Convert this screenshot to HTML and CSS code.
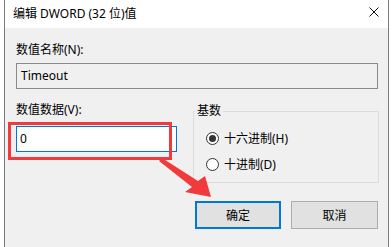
FILE: index.html
```html
<!DOCTYPE html>
<html lang="zh-CN">
<head>
<meta charset="utf-8">
<title>编辑 DWORD (32 位)值</title>
<link rel="stylesheet" href="styles.css">
</head>
<body>
<div class="page">
  <div class="dialog">
    <div class="titlebar">
      <span class="title">编辑 DWORD (32 位)值</span>
      <svg class="close" width="10" height="10" viewBox="0 0 10 10"><path d="M0.5 0.5 L9.5 9.5 M9.5 0.5 L0.5 9.5" stroke="#111" stroke-width="1" fill="none"/></svg>
    </div>
    <div class="content">
      <div class="label">数值名称(N):</div>
      <div class="textbox readonly">Timeout</div>
      <div class="lower">
        <div class="datacol">
          <div class="label">数值数据(V):</div>
          <div class="textbox active">0</div>
        </div>
        <fieldset class="group">
          <legend>基数</legend>
          <div class="radios">
            <div class="radio-row"><span class="radio checked"></span><span>十六进制(H)</span></div>
            <div class="radio-row"><span class="radio"></span><span>十进制(D)</span></div>
          </div>
        </fieldset>
      </div>
      <div class="buttons">
        <button class="btn default">确定</button>
        <button class="btn">取消</button>
      </div>
    </div>
  </div>
  <svg class="annot" width="392" height="247" viewBox="0 0 392 247">
    <rect x="9.5" y="123.5" width="161" height="35" fill="none" stroke="#f03a3c" stroke-width="3"/>
    <polygon points="162,158 198,181 205,176 211,197 185,192 192,187 159,161" fill="#f03a3c"/>
  </svg>
</div>
</body>
</html>
```

FILE: styles.css
```css
* { box-sizing: border-box; }
html, body { margin: 0; padding: 0; background: #ffffff; }
.page {
  position: relative;
  width: 392px;
  height: 247px;
  overflow: hidden;
  font-family: "Noto Sans", "Noto Sans CJK SC", sans-serif;
  font-size: 12px;
  color: #000;
}
.dialog {
  margin-left: 4px;
  width: 385px;
  height: 247px;
  border-left: 1px solid #7a7a7a;
  border-right: 1px solid #7a7a7a;
  background: #f0f0f0;
}
.titlebar {
  height: 28px;
  background: #ffffff;
  display: flex;
  align-items: center;
  justify-content: space-between;
  padding: 0 9px 0 8px;
}
.title { line-height: 16px; }
.close { display: block; margin-top: -4px; }
.content {
  padding: 14px 10px 0 11px;
}
.label { line-height: 16px; height: 16px; }
.textbox {
  height: 26px;
  line-height: 24px;
  border: 1px solid #8a8a8a;
}
.readonly {
  margin-top: 5px;
  background: #f0f0f0;
  padding-left: 4px;
}
.active {
  margin-top: 8px;
  background: #ffffff;
  border-color: #0078d7;
  padding-left: 3px;
}
.lower {
  margin-top: 13px;
  display: grid;
  grid-template-columns: 161px 186px;
  column-gap: 16px;
  align-items: start;
}
.group {
  margin: 1px 0 0 0;
  padding: 0;
  border: 1px solid #dcdcdc;
  min-width: 0;
}
.group legend {
  margin-left: 1px;
  padding: 0 2px;
  line-height: 16px;
}
.radios { padding: 6px 0 5px 12px; }
.radio-row {
  height: 26px;
  display: flex;
  align-items: center;
}
.radio {
  width: 13px;
  height: 13px;
  border: 1px solid #333;
  border-radius: 50%;
  background: #fff;
  margin-right: 5px;
  display: flex;
  align-items: center;
  justify-content: center;
}
.radio.checked::after {
  content: "";
  width: 7px;
  height: 7px;
  border-radius: 50%;
  background: #333;
}
.buttons {
  margin-top: 18px;
  display: flex;
  justify-content: flex-end;
  gap: 10px;
}
.btn {
  height: 28px;
  width: 87px;
  background: #e1e1e1;
  border: 1px solid #adadad;
  font-family: inherit;
  font-size: 12px;
  color: #000;
  padding: 0;
}
.btn.default {
  width: 86px;
  border: 2px solid #0078d7;
}
.annot {
  position: absolute;
  left: 0;
  top: 0;
  pointer-events: none;
}
```
